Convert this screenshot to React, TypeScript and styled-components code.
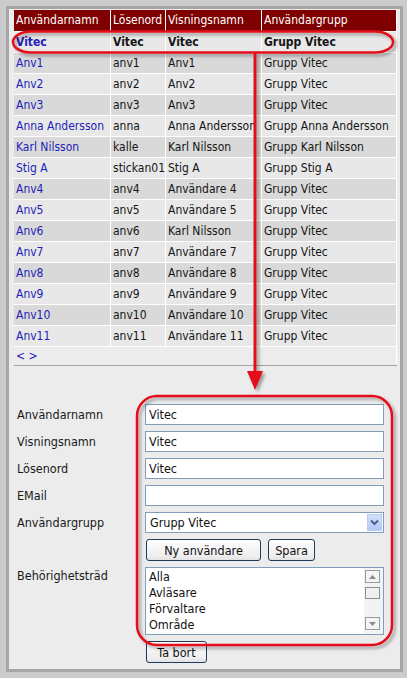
import React from "react";
import styled, { createGlobalStyle } from "styled-components";

const GlobalStyle = createGlobalStyle`
  html, body { margin: 0; padding: 0; background: #cbcbcb; }
  body {
    font-family: "DejaVu Sans Condensed", "DejaVu Sans", Verdana, sans-serif;
    font-size: 12.5px;
    color: #111;
  }
`;

const Frame = styled.div`
  position: relative;
  width: 407px;
  height: 678px;
  box-sizing: border-box;
  padding: 6px 4px 6px 6px;
  background: #cbcbcb;
`;

const Window = styled.div`
  height: 100%;
  box-sizing: border-box;
  border: 3px solid #a6a6a6;
`;

const Panel = styled.div`
  height: 100%;
  box-sizing: border-box;
  background: #ececec;
  padding: 1px 3px 0 5px;
  display: flex;
  flex-direction: column;
`;

const TableArea = styled.div`
  border-bottom: 1px solid #a3a3a3;
`;

const Grid = styled.table`
  width: 383px;
  table-layout: fixed;
  border-collapse: separate;
  border-spacing: 0;
  font-size: 12px;
`;

const Th = styled.th`
  background: #7e0000;
  color: #fff;
  font-weight: normal;
  text-align: left;
  line-height: 21px;
  padding: 0 0 0 2px;
  border-right: 1px solid #fff;
  border-bottom: 1px solid #fff;
  white-space: nowrap;
  overflow: hidden;
`;

const Td = styled.td<{ $dark: boolean; $bold: boolean }>`
  background: ${(p) => (p.$dark ? "#d9d9d9" : "#e8e8e8")};
  font-weight: ${(p) => (p.$bold ? "bold" : "normal")};
  color: #151515;
  line-height: 20px;
  padding: 0 0 0 2px;
  border-right: 1px solid #fff;
  border-bottom: 1px solid #fff;
  white-space: nowrap;
  overflow: hidden;
`;

const NavCell = styled.td`
  line-height: 18px;
  padding: 0 0 0 2px;
  border-right: 1px solid #fff;
`;

const Link = styled.a`
  color: #1e1eb8;
  text-decoration: none;
  cursor: pointer;
`;

const Form = styled.div`
  display: grid;
  grid-template-columns: 128px 239px;
  row-gap: 6px;
  padding: 38px 0 0 3px;
  align-items: center;
`;

const Label = styled.label<{ $top?: boolean }>`
  color: #1a1a1a;
  line-height: 16px;
  align-self: ${(p) => (p.$top ? "start" : "center")};
  padding-top: ${(p) => (p.$top ? "1px" : "0")};
`;

const TextInput = styled.input`
  height: 21px;
  box-sizing: border-box;
  border: 1px solid #7f9db9;
  background: #fff;
  padding: 0 3px;
  margin: 0;
  font: inherit;
  color: #111;
  outline: none;
`;

const SelectBox = styled.div`
  height: 21px;
  box-sizing: border-box;
  border: 1px solid #7f9db9;
  background: #fff;
  display: flex;
  align-items: stretch;
`;

const SelectValue = styled.span`
  flex: 1;
  padding-left: 4px;
  line-height: 19px;
`;

const DropButton = styled.span`
  width: 15px;
  margin: 1px;
  box-sizing: border-box;
  border: 1px solid #b8cbf4;
  background: linear-gradient(#d3e0fd, #b4c8f6);
  display: flex;
  align-items: center;
  justify-content: center;
`;

const ButtonRow = styled.div`
  grid-column: 2;
  display: flex;
  gap: 7px;
  padding-left: 1px;
`;

const Button = styled.button<{ $w: number }>`
  width: ${(p) => p.$w}px;
  height: 22px;
  box-sizing: border-box;
  border: 1px solid #1f3a5c;
  border-radius: 3px;
  background: linear-gradient(#fdfdfd, #eeeeee 80%, #e2e2e2);
  font: inherit;
  color: #111;
  padding: 0;
  margin: 0;
`;

const ListBox = styled.div`
  height: 68px;
  box-sizing: border-box;
  border: 1px solid #7f9db9;
  background: #fff;
  display: flex;
`;

const Items = styled.div`
  flex: 1;
  padding: 1px 0 0 3px;
  line-height: 16px;
`;

const ScrollBar = styled.div`
  width: 19px;
  box-sizing: border-box;
  padding: 2px 3px 4px 1px;
  background: #f3f3f3;
  display: flex;
  flex-direction: column;
`;

const ScrollBtn = styled.div`
  height: 13px;
  box-sizing: border-box;
  border: 1px solid #9a9a9a;
  background: #f4f4f4;
  display: flex;
  align-items: center;
  justify-content: center;
`;

const Thumb = styled.div`
  height: 12px;
  margin-top: 4px;
  box-sizing: border-box;
  border: 1px solid #8e8e8e;
  background: #f0f0f0;
`;

const Spacer = styled.div`
  flex: 1;
`;

const BottomRow = styled.div`
  grid-column: 2;
  padding-left: 1px;
`;

const Overlay = styled.svg`
  position: absolute;
  left: 0;
  top: 0;
  width: 407px;
  height: 678px;
  pointer-events: none;
`;

type Row = [string, string, string, string];

const rows: Row[] = [
  ["Vitec", "Vitec", "Vitec", "Grupp Vitec"],
  ["Anv1", "anv1", "Anv1", "Grupp Vitec"],
  ["Anv2", "anv2", "Anv2", "Grupp Vitec"],
  ["Anv3", "anv3", "Anv3", "Grupp Vitec"],
  ["Anna Andersson", "anna", "Anna Andersson", "Grupp Anna Andersson"],
  ["Karl Nilsson", "kalle", "Karl Nilsson", "Grupp Karl Nilsson"],
  ["Stig A", "stickan01", "Stig A", "Grupp Stig A"],
  ["Anv4", "anv4", "Användare 4", "Grupp Vitec"],
  ["Anv5", "anv5", "Användare 5", "Grupp Vitec"],
  ["Anv6", "anv6", "Karl Nilsson", "Grupp Vitec"],
  ["Anv7", "anv7", "Användare 7", "Grupp Vitec"],
  ["Anv8", "anv8", "Användare 8", "Grupp Vitec"],
  ["Anv9", "anv9", "Användare 9", "Grupp Vitec"],
  ["Anv10", "anv10", "Användare 10", "Grupp Vitec"],
  ["Anv11", "anv11", "Användare 11", "Grupp Vitec"],
];

const Chevron = () => (
  <svg width="9" height="7" viewBox="0 0 9 7">
    <path d="M1 1.5 L4.5 5 L8 1.5" fill="none" stroke="#4d6185" strokeWidth="2" />
  </svg>
);

const Tri = ({ up }: { up: boolean }) => (
  <svg width="7" height="4" viewBox="0 0 7 4">
    <path d={up ? "M0 4 L3.5 0 L7 4 Z" : "M0 0 L3.5 4 L7 0 Z"} fill="#8a8a8a" />
  </svg>
);

export default function App() {
  return (
    <>
      <GlobalStyle />
      <Frame>
        <Window>
          <Panel>
            <TableArea>
              <Grid>
                <colgroup>
                  <col style={{ width: 97 }} />
                  <col style={{ width: 55 }} />
                  <col style={{ width: 96 }} />
                  <col style={{ width: 135 }} />
                </colgroup>
                <thead>
                  <tr>
                    <Th>Användarnamn</Th>
                    <Th>Lösenord</Th>
                    <Th>Visningsnamn</Th>
                    <Th>Användargrupp</Th>
                  </tr>
                </thead>
                <tbody>
                  {rows.map((r, i) => (
                    <tr key={i}>
                      <Td $dark={i % 2 === 1} $bold={i === 0}>
                        <Link>{r[0]}</Link>
                      </Td>
                      <Td $dark={i % 2 === 1} $bold={i === 0}>{r[1]}</Td>
                      <Td $dark={i % 2 === 1} $bold={i === 0}>{r[2]}</Td>
                      <Td $dark={i % 2 === 1} $bold={i === 0}>{r[3]}</Td>
                    </tr>
                  ))}
                  <tr>
                    <NavCell colSpan={4}>
                      <Link>&lt;</Link> <Link>&gt;</Link>
                    </NavCell>
                  </tr>
                </tbody>
              </Grid>
            </TableArea>
            <Form>
              <Label>Användarnamn</Label>
              <TextInput defaultValue="Vitec" />
              <Label>Visningsnamn</Label>
              <TextInput defaultValue="Vitec" />
              <Label>Lösenord</Label>
              <TextInput defaultValue="Vitec" />
              <Label>EMail</Label>
              <TextInput defaultValue="" />
              <Label>Användargrupp</Label>
              <SelectBox>
                <SelectValue>Grupp Vitec</SelectValue>
                <DropButton>
                  <Chevron />
                </DropButton>
              </SelectBox>
              <ButtonRow>
                <Button $w={115}>Ny användare</Button>
                <Button $w={47}>Spara</Button>
              </ButtonRow>
              <Label $top>Behörighetsträd</Label>
              <ListBox>
                <Items>
                  <div>Alla</div>
                  <div>Avläsare</div>
                  <div>Förvaltare</div>
                  <div>Område</div>
                </Items>
                <ScrollBar>
                  <ScrollBtn>
                    <Tri up />
                  </ScrollBtn>
                  <Thumb />
                  <Spacer />
                  <ScrollBtn>
                    <Tri up={false} />
                  </ScrollBtn>
                </ScrollBar>
              </ListBox>
              <BottomRow>
                <Button $w={61}>Ta bort</Button>
              </BottomRow>
            </Form>
          </Panel>
        </Window>
        <Overlay viewBox="0 0 407 678">
          <defs>
            <filter id="sh" x="-10%" y="-10%" width="130%" height="130%">
              <feDropShadow dx="2.5" dy="2.5" stdDeviation="1.6" floodColor="#000" floodOpacity="0.35" />
            </filter>
          </defs>
          <g filter="url(#sh)" fill="none" stroke="#e3101a" strokeWidth="2.5">
            <rect x="13" y="31.5" width="380" height="21" rx="18" ry="10.5" />
            <line x1="255" y1="53" x2="255" y2="374" strokeWidth="3" />
            <polygon points="247,371 263,371 255,390" fill="#e3101a" stroke="none" />
            <rect x="137" y="396" width="255" height="249" rx="20" ry="20" />
          </g>
        </Overlay>
      </Frame>
    </>
  );
}
